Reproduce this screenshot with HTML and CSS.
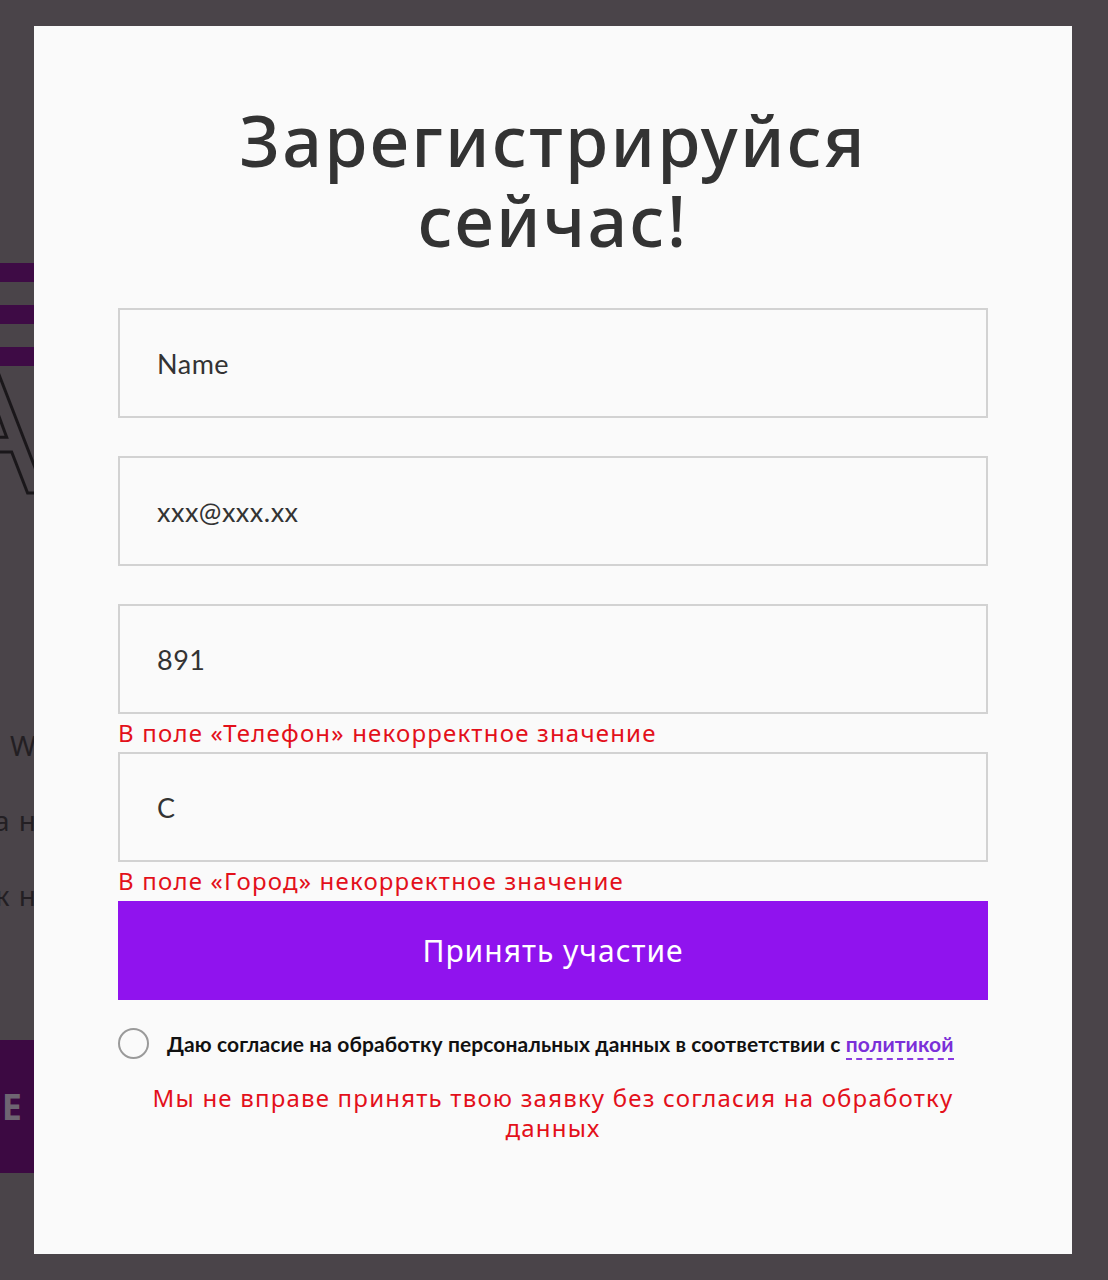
FILE: index.html
```html
<!DOCTYPE html>
<html lang="ru">
<head>
<meta charset="utf-8">
<title>Регистрация</title>
<link rel="stylesheet" href="styles.css">
</head>
<body>
<div class="page">
  <div class="bars">
    <div class="bar"></div>
    <div class="bar"></div>
    <div class="bar"></div>
  </div>
  <div class="big-letter-wrap"><span class="big-letter">A</span></div>
  <div class="bg-lines">
    <div class="bg-line"><span>W</span></div>
    <div class="bg-line"><span>да н</span></div>
    <div class="bg-line"><span>ж н</span></div>
  </div>
  <div class="bg-block"><span>E</span></div>
</div>

<div class="overlay">
  <div class="modal">
    <h1 class="title">Зарегистрируйся<br>сейчас!</h1>
    <form class="form">
      <div class="field">
        <div class="input">Name</div>
        <div class="error"></div>
      </div>
      <div class="field">
        <div class="input">xxx@xxx.xx</div>
        <div class="error"></div>
      </div>
      <div class="field">
        <div class="input">891</div>
        <div class="error">В поле «Телефон» некорректное значение</div>
      </div>
      <div class="field">
        <div class="input">С</div>
        <div class="error">В поле «Город» некорректное значение</div>
      </div>
      <div class="submit">Принять участие</div>
      <div class="consent">
        <span class="radio"></span>
        <span class="consent-text">Даю согласие на обработку персональных данных в соответствии с <span class="policy">политикой</span></span>
      </div>
      <div class="consent-error">Мы не вправе принять твою заявку без согласия на обработку данных</div>
    </form>
  </div>
</div>
</body>
</html>
```
FILE: styles.css
```css
html, body {
  margin: 0;
  padding: 0;
}
body {
  background: #4a4449;
  width: 1108px;
  height: 1280px;
  overflow: hidden;
  font-family: "Noto Sans", "Open Sans", sans-serif;
}

/* background page (under the overlay) */
.page {
  padding-top: 263px;
}
.bars {
  display: flex;
  flex-direction: column;
  gap: 23px;
}
.bar {
  width: 60px;
  height: 19px;
  background: #3e0b45;
}
.big-letter-wrap {
  display: flex;
  justify-content: flex-end;
  width: 45px;
  height: 100px;
  margin-top: 5px;
  overflow: visible;
}
.big-letter {
  font-family: "Noto Sans", sans-serif;
  font-size: 185px;
  line-height: 100px;
  font-weight: 400;
  color: transparent;
  -webkit-text-stroke: 3px #1a171a;
}
.bg-lines {
  margin-top: 255px;
  display: flex;
  flex-direction: column;
  gap: 37px;
}
.bg-line {
  display: flex;
  justify-content: flex-end;
  width: 37px;
  height: 38px;
  font-size: 28px;
  line-height: 38px;
  color: #231f23;
  white-space: nowrap;
  letter-spacing: 1px;
}
.bg-block {
  margin-top: 126px;
  width: 60px;
  height: 133px;
  box-sizing: border-box;
  padding-right: 38px;
  background: #3c0942;
  display: flex;
  align-items: center;
  justify-content: flex-end;
  font-size: 36px;
  font-weight: 700;
  color: #6e6572;
  white-space: nowrap;
}

/* overlay + modal */
.overlay {
  position: absolute;
  top: 0;
  left: 0;
  width: 1108px;
  height: 1280px;
  padding: 26px 36px 26px 34px;
  box-sizing: border-box;
}
.modal {
  background: #fafafa;
  height: 100%;
  box-sizing: border-box;
  padding: 74px 84px 0;
}
.title {
  margin: 0;
  text-align: center;
  font-size: 70px;
  line-height: 80px;
  font-weight: 500;
  letter-spacing: 2.3px;
  color: #333333;
}
.form {
  margin-top: 48px;
  display: flex;
  flex-direction: column;
}
.input {
  height: 110px;
  box-sizing: border-box;
  border: 2px solid #d2d2d2;
  background: #fafafa;
  display: flex;
  align-items: center;
  padding-left: 37px;
  font-family: "Lato", "Noto Sans", sans-serif;
  font-size: 27px;
  letter-spacing: 0.5px;
  color: #333333;
}
.error {
  height: 38px;
  line-height: 38px;
  font-size: 24px;
  letter-spacing: 1.2px;
  color: #e3101a;
  white-space: nowrap;
}
.submit {
  margin-top: 1px;
  height: 99px;
  background: #9013ee;
  color: #ffffff;
  display: flex;
  align-items: center;
  justify-content: center;
  font-size: 30px;
  letter-spacing: 1px;
}
.consent {
  margin-top: 28px;
  display: flex;
  align-items: center;
  gap: 18px;
}
.radio {
  flex: none;
  width: 31px;
  height: 31px;
  box-sizing: border-box;
  border: 2px solid #9a9a9a;
  border-radius: 50%;
}
.consent-text {
  font-family: "Lato", "Noto Sans", sans-serif;
  font-weight: 700;
  font-size: 21px;
  letter-spacing: 0.1px;
  color: #111111;
  white-space: nowrap;
}
.policy {
  color: #7b2fd8;
  border-bottom: 2px dashed #8a3ae0;
  padding-bottom: 2px;
}
.consent-error {
  margin-top: 24px;
  text-align: center;
  font-size: 24px;
  line-height: 30px;
  letter-spacing: 1.2px;
  color: #e3101a;
  padding: 0 30px;
}
```
